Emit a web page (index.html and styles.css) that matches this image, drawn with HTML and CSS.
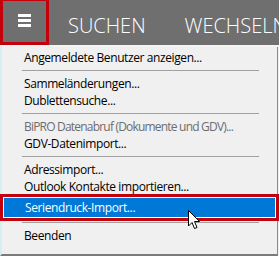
FILE: index.html
```html
<!DOCTYPE html>
<html>
  <head>
    <meta charset="utf-8" />
    <title>Menü</title>
    <link rel="stylesheet" href="styles.css">
  </head>
  <body>
    <div class="topbar">
      <div class="menu-btn">
        <span class="bar"></span>
        <span class="bar"></span>
        <span class="bar"></span>
      </div>
      <div class="tab">SUCHEN</div>
      <div class="tab">WECHSELN</div>
    </div>

    <ul class="menu">
      <li class="item">Angemeldete Benutzer anzeigen...</li>
      <li class="sep"></li>
      <li class="item">Sammeländerungen...</li>
      <li class="item">Dublettensuche...</li>
      <li class="sep"></li>
      <li class="item disabled">BiPRO Datenabruf (Dokumente und GDV)...</li>
      <li class="item">GDV-Datenimport...</li>
      <li class="sep"></li>
      <li class="item">Adressimport...</li>
      <li class="item">Outlook Kontakte importieren...</li>
      <li class="item active">
        Seriendruck-Import...
        <!-- mouse pointer over the hovered entry -->
        <svg class="cursor" width="13" height="20" viewBox="0 0 13 20">
          <path d="M0.5 0.5 L0.5 16 L4 12.5 L6.5 18.5 L9 17.5 L6.5 11.5 L11.5 11.5 Z" fill="#fff" stroke="#000" stroke-width="1" stroke-linejoin="miter" />
        </svg>
      </li>
      <li class="sep"></li>
      <li class="item">Beenden</li>
    </ul>
  </body>
</html>
```

FILE: styles.css
```css
body {
  margin: 0;
  width: 279px;
  height: 256px;
  overflow: hidden;
  background-color: #f0f0f0;
  font-family: "Open Sans", "Noto Sans", sans-serif;
}

.topbar {
  display: flex;
  align-items: center;
  height: 45px;
  background-color: #6f6f6f;
  border-bottom: 2px solid #f4f4f4;
  overflow: hidden;
  white-space: nowrap;
}

.menu-btn {
  box-sizing: border-box;
  flex: none;
  width: 49px;
  height: 45px;
  border: 3px solid #c4000b;
  border-top-width: 1px;
  display: flex;
  flex-direction: column;
  align-items: center;
  justify-content: center;
  gap: 2px;
  padding-bottom: 2px;
}

.menu-btn .bar {
  display: block;
  width: 13px;
  height: 3px;
  background-color: #fff;
}

.tab {
  flex: none;
  color: #fff;
  font-size: 20px;
  font-weight: 300;
  margin-left: 19px;
  padding-top: 5px;
}

.tab + .tab {
  margin-left: 39px;
}

.menu {
  list-style: none;
  margin: 0;
  padding: 2px 0 0 0;
  height: 205px;
  width: 275px;
  border-left: 2px solid #d6efef;
  border-right: 1px solid #8a8a8a;
  border-bottom: 2px solid #7a7a7a;
  font-size: 12px;
  letter-spacing: -0.4px;
  color: #000;
}

.item {
  position: relative;
  height: 17px;
  line-height: 17px;
  padding-left: 22px;
}

.item.disabled {
  color: #6d6d6d;
  letter-spacing: -0.8px;
}

.sep {
  height: 1px;
  margin: 4px 18px 4px 20px;
  background-color: #a0a0a0;
}

.item.active {
  margin: 2px 1px 0 1px;
  height: 19px;
  line-height: 19px;
  padding-left: 21px;
  color: #fff;
  background-color: #0078d7;
  border: 1px solid #fff;
  box-shadow: 0 0 0 3px #c4000b;
}

.cursor {
  position: absolute;
  left: 184px;
  top: 12px;
}
```
